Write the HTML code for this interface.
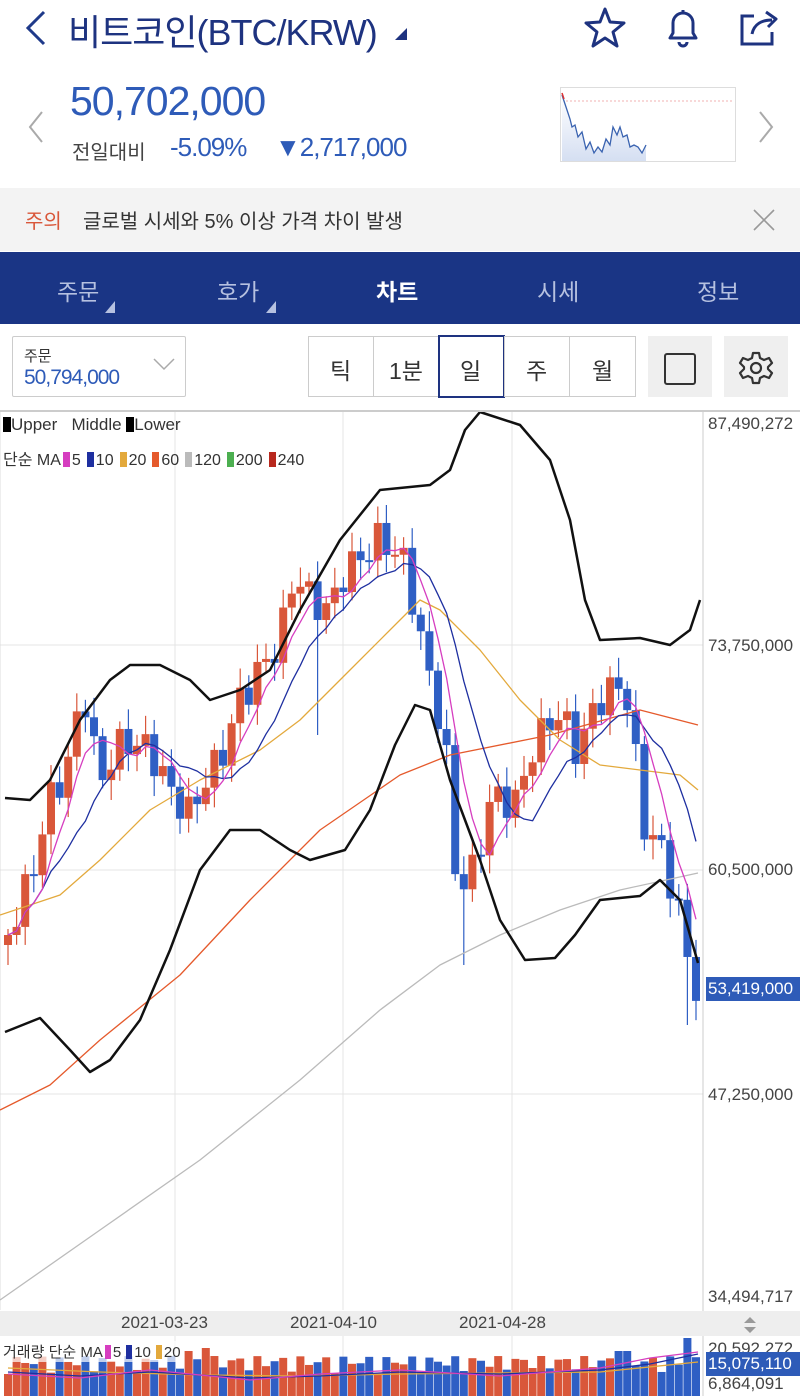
<!DOCTYPE html>
<html><head><meta charset="utf-8"><style>
*{margin:0;padding:0;box-sizing:border-box}
body{width:800px;height:1396px;overflow:hidden;background:#fff;font-family:"Liberation Sans","Noto Sans CJK KR",sans-serif;position:relative}
.a{position:absolute;white-space:nowrap}
</style></head><body>
<!-- header -->
<svg class="a" style="left:22px;top:8px" width="30" height="40"><path d="M22 4 L6 20 L22 36" fill="none" stroke="#1f3a8a" stroke-width="3"/></svg>
<div class="a" style="left:68px;top:4px;font-size:36px;color:#1e3380;letter-spacing:-1px">비트코인(BTC/KRW)</div>
<svg class="a" style="left:393px;top:26px" width="16" height="16"><path d="M14 2 L14 14 L2 14Z" fill="#1e3380"/></svg>
<svg class="a" style="left:583px;top:6px" width="44" height="44" viewBox="0 0 44 44"><path d="M22 3 L27 16 L41 17 L30 26 L34 40 L22 32 L10 40 L14 26 L3 17 L17 16Z" fill="none" stroke="#1e3380" stroke-width="3" stroke-linejoin="round"/></svg>
<svg class="a" style="left:662px;top:6px" width="42" height="42" viewBox="0 0 42 42"><path d="M8 32 L34 32 L31 27 L31 17 A10 10 0 0 0 11 17 L11 27 Z" fill="none" stroke="#1e3380" stroke-width="3" stroke-linejoin="round"/><path d="M17 36 A4 4 0 0 0 25 36" fill="none" stroke="#1e3380" stroke-width="3"/><path d="M21 4 L21 7" stroke="#1e3380" stroke-width="3"/></svg>
<svg class="a" style="left:738px;top:6px" width="44" height="42" viewBox="0 0 44 42"><path d="M16 10 L4 10 L4 38 L34 38 L34 26" fill="none" stroke="#1e3380" stroke-width="3"/><path d="M14 28 C16 18 24 14 34 14 M28 6 L38 13 L30 21" fill="none" stroke="#1e3380" stroke-width="3" stroke-linejoin="round"/></svg>

<svg class="a" style="left:26px;top:110px" width="20" height="34"><path d="M16 2 L4 17 L16 32" fill="none" stroke="#aaa" stroke-width="2"/></svg>
<div class="a" style="left:70px;top:78px;font-size:41px;color:#2e5bb8;letter-spacing:-1px">50,702,000</div>
<div class="a" style="left:72px;top:136px;font-size:20px;color:#444">전일대비</div>
<div class="a" style="left:170px;top:132px;font-size:26px;color:#2e5bb8;letter-spacing:-1px">-5.09%</div>
<div class="a" style="left:275px;top:132px;font-size:26px;color:#2e5bb8;letter-spacing:-1px">▼2,717,000</div>
<svg class="a" style="left:560px;top:87px" width="176" height="75" viewBox="0 0 176 75"><rect x="0.5" y="0.5" width="175" height="74" fill="#fff" stroke="#ddd"/><path d="M2 14 L174 14" stroke="#f0b0b0" stroke-dasharray="2 2"/><defs><linearGradient id="g" x1="0" y1="0" x2="0" y2="1"><stop offset="0" stop-color="#fff"/><stop offset="1" stop-color="#d5dff2"/></linearGradient></defs><path d="M2 8 L6 20 L10 32 L12 40 L15 38 L18 50 L22 45 L26 62 L30 55 L34 66 L38 60 L42 65 L46 52 L50 58 L53 40 L57 48 L60 40 L63 50 L67 48 L70 60 L74 58 L78 60 L82 66 L86 58 L86 74 L2 74Z" fill="url(#g)"/><path d="M2 8 L6 20 L10 32 L12 40 L15 38 L18 50 L22 45 L26 62 L30 55 L34 66 L38 60 L42 65 L46 52 L50 58 L53 40 L57 48 L60 40 L63 50 L67 48 L70 60 L74 58 L78 60 L82 66 L86 58" fill="none" stroke="#3a63b0" stroke-width="1.3"/><path d="M2 6 L4 12" stroke="#d33" stroke-width="1.5"/></svg>
<svg class="a" style="left:756px;top:110px" width="20" height="34"><path d="M4 2 L16 17 L4 32" fill="none" stroke="#aaa" stroke-width="2"/></svg>

<!-- notice -->
<div class="a" style="left:0;top:188px;width:800px;height:63px;background:#f3f3f3"></div>
<div class="a" style="left:25px;top:205px;font-size:20px;color:#d9573a">주의</div>
<div class="a" style="left:83px;top:205px;font-size:20px;color:#333">글로벌 시세와 5% 이상 가격 차이 발생</div>
<svg class="a" style="left:752px;top:208px" width="24" height="24"><path d="M2 2 L22 22 M22 2 L2 22" stroke="#999" stroke-width="1.6"/></svg>

<!-- tabs -->
<div class="a" style="left:0;top:252px;width:800px;height:72px;background:#1a3585"></div>
<div class="a" style="left:57px;top:273px;font-size:23px;color:#b6c1e0">주문</div>
<svg class="a" style="left:104px;top:300px" width="12" height="14"><path d="M11 1 L11 13 L1 13Z" fill="#b6c1e0"/></svg>
<div class="a" style="left:217px;top:273px;font-size:23px;color:#b6c1e0">호가</div>
<svg class="a" style="left:265px;top:300px" width="12" height="14"><path d="M11 1 L11 13 L1 13Z" fill="#b6c1e0"/></svg>
<div class="a" style="left:376px;top:273px;font-size:23px;color:#fff;font-weight:bold">차트</div>
<div class="a" style="left:537px;top:273px;font-size:23px;color:#b6c1e0">시세</div>
<div class="a" style="left:697px;top:273px;font-size:23px;color:#b6c1e0">정보</div>

<!-- controls -->
<div class="a" style="left:12px;top:336px;width:174px;height:61px;border:1px solid #ccc;border-radius:2px"></div>
<div class="a" style="left:24px;top:345px;font-size:15px;color:#333">주문</div>
<div class="a" style="left:24px;top:366px;font-size:21px;color:#2e5bb8;letter-spacing:-1px">50,794,000</div>
<svg class="a" style="left:152px;top:356px" width="24" height="16"><path d="M2 3 L12 13 L22 3" fill="none" stroke="#aaa" stroke-width="1.5"/></svg>
<div class="a" style="left:308px;top:336px;width:328px;height:61px;border:1px solid #ccc"></div>
<div class="a" style="left:373px;top:336px;width:1px;height:61px;background:#ccc"></div>
<div class="a" style="left:569px;top:336px;width:1px;height:61px;background:#ccc"></div>
<div class="a" style="left:438px;top:335px;width:67px;height:63px;border:2px solid #1e3380"></div>
<div class="a" style="left:504px;top:336px;width:1px;height:61px;background:#ccc"></div>
<div class="a" style="left:330px;top:352px;font-size:23px;color:#333">틱</div>
<div class="a" style="left:389px;top:352px;font-size:23px;color:#333">1분</div>
<div class="a" style="left:460px;top:352px;font-size:23px;color:#333">일</div>
<div class="a" style="left:526px;top:352px;font-size:23px;color:#333">주</div>
<div class="a" style="left:592px;top:352px;font-size:23px;color:#333">월</div>
<div class="a" style="left:648px;top:336px;width:64px;height:61px;background:#efefef"></div>
<div class="a" style="left:664px;top:353px;width:32px;height:32px;border:2.5px solid #333;border-radius:3px"></div>
<div class="a" style="left:724px;top:336px;width:64px;height:61px;background:#efefef"></div>
<svg class="a" style="left:738px;top:350px" width="36" height="36" viewBox="0 0 36 36"><path d="M15 3 L21 3 L22 8 L26 10 L31 8 L34 13 L30 17 L30 19 L34 23 L31 28 L26 26 L22 28 L21 33 L15 33 L14 28 L10 26 L5 28 L2 23 L6 19 L6 17 L2 13 L5 8 L10 10 L14 8Z" fill="none" stroke="#333" stroke-width="2.2" stroke-linejoin="round"/><circle cx="18" cy="18" r="5" fill="none" stroke="#333" stroke-width="2.2"/></svg>

<!-- chart -->
<svg class="a" id="ch" style="left:0;top:0" width="800" height="1396"></svg>
<div class="a" style="left:0;top:410px;width:800px;height:2px;background:#ccc"></div>
<div class="a" style="left:3px;top:415px;font-size:17px;color:#333"><span style="display:inline-block;width:8px;height:15px;background:#000;vertical-align:-2px"></span>Upper &nbsp;&nbsp;Middle <span style="display:inline-block;width:8px;height:15px;background:#000;vertical-align:-2px"></span>Lower</div>
<div class="a" style="left:3px;top:446px;font-size:16px;color:#333">단순 MA<span style="display:inline-block;width:7px;height:15px;background:#d63ec0;margin:0 2px;vertical-align:-2px"></span>5<span style="display:inline-block;width:7px;height:15px;background:#1e2fa0;margin:0 2px 0 6px;vertical-align:-2px"></span>10<span style="display:inline-block;width:7px;height:15px;background:#e3a93c;margin:0 2px 0 6px;vertical-align:-2px"></span>20<span style="display:inline-block;width:7px;height:15px;background:#e55a2c;margin:0 2px 0 6px;vertical-align:-2px"></span>60<span style="display:inline-block;width:7px;height:15px;background:#bbb;margin:0 2px 0 6px;vertical-align:-2px"></span>120<span style="display:inline-block;width:7px;height:15px;background:#4caf50;margin:0 2px 0 6px;vertical-align:-2px"></span>200<span style="display:inline-block;width:7px;height:15px;background:#b8281e;margin:0 2px 0 6px;vertical-align:-2px"></span>240</div>
<div class="a" style="left:708px;top:414px;font-size:17px;color:#444">87,490,272</div>
<div class="a" style="left:708px;top:636px;font-size:17px;color:#444">73,750,000</div>
<div class="a" style="left:708px;top:860px;font-size:17px;color:#444">60,500,000</div>
<div class="a" style="left:708px;top:1085px;font-size:17px;color:#444">47,250,000</div>
<div class="a" style="left:708px;top:1287px;font-size:17px;color:#444">34,494,717</div>
<div class="a" style="left:706px;top:977px;width:94px;height:24px;background:#2e5bb8"></div>
<div class="a" style="left:708px;top:979px;font-size:17px;color:#fff">53,419,000</div>
<div class="a" style="left:0;top:1311px;width:800px;height:25px;background:#eeeeee"></div>
<div class="a" style="left:121px;top:1313px;font-size:17px;color:#444">2021-03-23</div>
<div class="a" style="left:290px;top:1313px;font-size:17px;color:#444">2021-04-10</div>
<div class="a" style="left:459px;top:1313px;font-size:17px;color:#444">2021-04-28</div>
<svg class="a" style="left:742px;top:1316px" width="16" height="18"><path d="M2 7 L8 1 L14 7Z M2 11 L8 17 L14 11Z" fill="#999"/></svg>
<div class="a" style="left:708px;top:1339px;font-size:17px;color:#444">20,592,272</div>
<div class="a" style="left:708px;top:1374px;font-size:17px;color:#444">6,864,091</div>
<div class="a" style="left:706px;top:1352px;width:94px;height:24px;background:#2e5bb8"></div>
<div class="a" style="left:708px;top:1354px;font-size:17px;color:#fff">15,075,110</div>
<div class="a" style="left:3px;top:1341px;font-size:15px;color:#333;background:rgba(255,255,255,.7)">거래량 단순 MA<span style="display:inline-block;width:6px;height:14px;background:#d63ec0;margin:0 2px;vertical-align:-2px"></span>5<span style="display:inline-block;width:6px;height:14px;background:#1e2fa0;margin:0 2px 0 5px;vertical-align:-2px"></span>10<span style="display:inline-block;width:6px;height:14px;background:#e3a93c;margin:0 2px 0 5px;vertical-align:-2px"></span>20</div>
<script>
var s=document.getElementById('ch'),h='';
function L(x1,y1,x2,y2,c,w){h+='<line x1="'+x1+'" y1="'+y1+'" x2="'+x2+'" y2="'+y2+'" stroke="'+c+'" stroke-width="'+(w||1)+'"/>';}
function P(pts,c,w){h+='<polyline fill="none" stroke="'+c+'" stroke-width="'+w+'" stroke-linejoin="round" points="'+pts.map(function(p){return p.join(',')}).join(' ')+'"/>';}
[645,870,1094].forEach(function(y){L(0,y,703,y,'#e4e4e4')});
[175,343,512].forEach(function(x){L(x,412,x,1310,'#e4e4e4');L(x,1336,x,1396,'#e4e4e4')});
L(703,412,703,1396,'#ccc');L(0,412,0,1310,'#ddd');
var k=[[8,935],[30,880],[50,800],[70,760],[80,700],[90,700],[97,790],[110,760],[125,740],[150,750],[170,790],[190,815],[205,780],[220,760],[240,700],[260,670],[280,640],[295,570],[310,600],[330,610],[345,570],[360,560],[375,540],[390,545],[405,565],[415,610],[425,660],[435,700],[445,740],[455,870],[465,880],[475,870],[490,800],[505,800],[520,800],[530,750],[545,730],[560,710],[575,750],[590,720],[605,690],[620,690],[632,700],[640,830],[655,830],[665,870],[678,900],[688,970],[697,985]];
function interp(x){for(var i=0;i<k.length-1;i++){if(x<=k[i+1][0]){var a=k[i],b=k[i+1];return a[1]+(b[1]-a[1])*(x-a[0])/(b[0]-a[0]);}}return k[k.length-1][1];}
var n=81,dx=8.6,cl=[],xs=[];
for(var i=0;i<n;i++){var x=8+i*dx;xs.push(x);var j=Math.sin(i*2.3)*18;cl.push(interp(x)+j);}
var prev=cl[0]+10,vol='';
for(var i=0;i<n;i++){var o=prev,c=cl[i],up=c<o,col=up?'#d9573a':'#2f5fc4';var t=Math.min(o,c),b=Math.max(o,c);if(b-t<2)b=t+2;
var wt=t-6-Math.abs(Math.sin(i*1.7))*14,wb=b+6+Math.abs(Math.cos(i*1.3))*14;if(i==53)wb=965;if(i==79)wb=1025;if(i==36)wb=735;if(i==44)wt=505;
L(xs[i],wt,xs[i],wb,col,1.2);h+='<rect x="'+(xs[i]-4)+'" y="'+t+'" width="8" height="'+(b-t)+'" fill="'+col+'"/>';
var vh=22+Math.abs(Math.sin(i*1.9))*18;if(i==79)vh=58;if(i==21||i==71||i==72)vh=45;if(i==23)vh=48;vol+='<rect x="'+(xs[i]-4)+'" y="'+(1396-vh)+'" width="8" height="'+vh+'" fill="'+col+'"/>';prev=c;}
function ma(p){var r=[];for(var i=0;i<n;i++){var a=0,m=0;for(var j=Math.max(0,i-p+1);j<=i;j++){a+=cl[j];m++;}r.push([xs[i],a/m]);}return r;}
P([[0,1300],[100,1230],[200,1160],[300,1080],[380,1010],[440,965],[500,935],[560,910],[620,890],[698,873]],'#bbb',1.3);
P([[0,1110],[50,1085],[100,1040],[180,975],[250,900],[320,830],[400,775],[450,755],[550,735],[640,710],[698,725]],'#e55a2c',1.3);
P([[0,915],[60,895],[100,860],[150,810],[200,780],[260,750],[300,720],[350,670],[400,620],[420,600],[440,610],[480,650],[520,700],[560,740],[600,765],[640,770],[680,775],[698,790]],'#e3a93c',1.3);
P(ma(10),'#1e2fa0',1.3);P(ma(5),'#d63ec0',1.3);
P([[5,798],[30,800],[50,780],[80,720],[110,680],[130,665],[160,665],[190,680],[210,700],[240,690],[270,670],[300,610],[340,540],[380,490],[430,485],[450,470],[465,430],[480,412],[520,425],[550,460],[570,520],[585,600],[600,640],[640,638],[670,645],[690,630],[700,600]],'#111',2.5);
P([[5,1032],[40,1018],[70,1050],[90,1072],[110,1060],[140,1020],[170,950],[200,870],[230,830],[260,830],[290,850],[310,860],[345,850],[370,810],[395,745],[415,705],[430,710],[450,780],[480,860],[500,920],[525,960],[555,958],[575,935],[600,900],[640,896],[660,880],[680,900],[698,963]],'#111',2.5);
h+=vol;
P([[8,1368],[100,1372],[200,1375],[300,1376],[400,1374],[500,1373],[600,1372],[698,1362]],'#e3a93c',1.3);
P([[8,1372],[80,1376],[150,1372],[250,1378],[320,1376],[400,1372],[500,1374],[600,1370],[650,1364],[698,1354]],'#1e2fa0',1.3);
P([[8,1374],[80,1378],[150,1370],[250,1380],[320,1374],[400,1370],[500,1376],[600,1368],[650,1358],[698,1352]],'#d63ec0',1.3);
s.innerHTML=h;
</script>
</body></html>
